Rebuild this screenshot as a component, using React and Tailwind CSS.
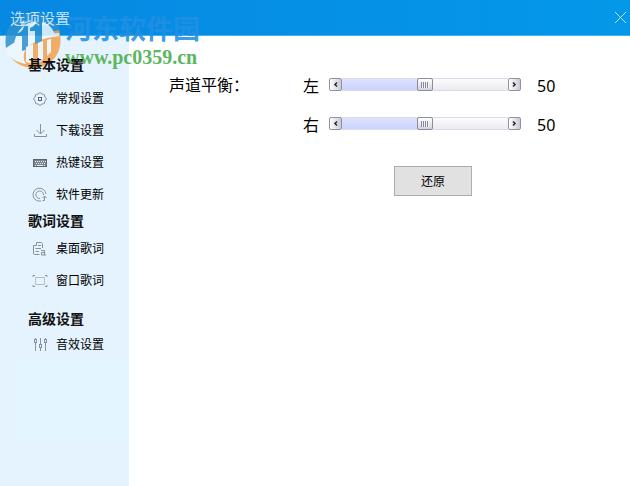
import { useState } from 'react'

const icon = { width: 16, height: 16, viewBox: '0 0 16 16', fill: 'none', stroke: '#87939b', 'aria-hidden': true }

function GearIcon() {
  return (
    <svg {...icon}>
      <path d="M6 3Q8 0 10 3Q13 2.5 13 6Q16 8 13 10Q13 13.5 10 13Q8 16 6 13Q3 13.5 3 10Q0 8 3 6Q3 2.5 6 3Z" />
      <rect x="6.5" y="6.5" width="3" height="3" stroke="#59636a" />
    </svg>
  )
}

function DownloadIcon() {
  return (
    <svg {...icon}>
      <path d="M8.5 1V11M4.5 7L8.5 11L12.5 7" />
      <path d="M2.5 11V13.5H14.5V11" />
    </svg>
  )
}

function KeyboardIcon() {
  return (
    <svg {...icon}>
      <rect x="1.5" y="4.5" width="13" height="7" fill="#7c868c" stroke="#59636a" />
      <path d="M3 6.5H14M4 8.5H14" stroke="#dcecf5" strokeDasharray="1 1" />
      <path d="M3 10.5H4M5 10.5H11M12 10.5H13" stroke="#dcecf5" />
    </svg>
  )
}

function UpdateIcon() {
  return (
    <svg {...icon}>
      <path d="M9 14A6.5 6.5 0 1 1 14 7" />
      <path d="M8 11.5A3.8 3.8 0 1 1 11.5 8" />
      <path d="M10.5 11L12.5 9L14.5 11M12.5 9V13.5H10.5" />
    </svg>
  )
}

function LyricsIcon() {
  return (
    <svg {...icon}>
      <path d="M7.5 13.5H2.5Q1.5 13.5 1.5 12V4.5H4.5V1.5H9.5L10.5 2.5V7" />
      <path d="M6 4.5H9M3.5 7.5H9M3.5 10.5H7" />
      <path d="M9 9.5H12.5V14M12.5 11.5H9.5V14H14" />
    </svg>
  )
}

function WindowIcon() {
  return (
    <svg {...icon}>
      <rect x="3.5" y="4.5" width="9" height="7" stroke="#b2c2cb" />
      <path d="M1 4V2.5H3M13 2.5H15V4M1 12V13.5H3M13 13.5H15V12" />
    </svg>
  )
}

function MixerIcon() {
  return (
    <svg {...icon}>
      <path d="M3.5 5V14M8.5 1V7M8.5 11V14M13.5 5V14M3.5 1V2M13.5 1V2" />
      <rect x="2.5" y="2.5" width="2" height="3" />
      <rect x="7.5" y="7.5" width="2" height="3" />
      <rect x="12.5" y="2.5" width="2" height="3" />
    </svg>
  )
}

function SiteLogo() {
  return (
    <svg className="opacity-85" width="58" height="58" viewBox="4 11 58 58" aria-hidden="true">
      <path d="M6 48C3 28 15 14 33 13C47 13 57 20 60 31C42 32 22 36 6 48Z" fill="#2b92d0" />
      <path d="M59 30C65 50 53 67 34 68C21 68 11 61 7 50C24 40 42 34 59 30Z" fill="#f2a14d" />
      <path d="M14 46C15 33 22 24 32 22C44 20 52 25 55 35Q36 38 14 46Z" fill="#eef8fd" />
      <path d="M6 50C20 39 39 34 58 33Q60 33 59 36C42 38 30 43 25 50Q22 58 26 64Q10 61 6 50Z" fill="#eef8fd" />
      <path d="M16 34Q23 32 24 26H28V49L22 51V36H16Z" fill="#2b92d0" />
      <path d="M30 28Q36 26 37 20H42V41L35 44V31H30Z" fill="#2b92d0" />
      <path d="M26 47L33 44V64L26 62ZM38 43L43 41V59Q41 62 38 63ZM47 40L51 39V52L47 56Z" fill="#eef8fd" />
      <path d="M23 20l1 2 3 0-2 2 1 3-3-2-2 2 0-3-2-2 3 0z" fill="#9fd2f2" />
    </svg>
  )
}

const sections = [
  {
    title: '基本设置',
    className: 'space-y-2 pt-[19px]',
    items: [
      { name: '常规设置', Icon: GearIcon },
      { name: '下载设置', Icon: DownloadIcon },
      { name: '热键设置', Icon: KeyboardIcon },
      { name: '软件更新', Icon: UpdateIcon },
    ],
  },
  {
    title: '歌词设置',
    className: 'space-y-0.5',
    items: [
      { name: '桌面歌词', Icon: LyricsIcon },
      { name: '窗口歌词', Icon: WindowIcon },
    ],
  },
  {
    title: '高级设置',
    className: 'pt-3',
    items: [{ name: '音效设置', Icon: MixerIcon }],
  },
]

function Sidebar() {
  return (
    <nav className="w-[129px] shrink-0 bg-[#e4f3fd]">
      {sections.map(s => (
        <section key={s.title} className={s.className}>
          <h2 className="relative z-10 pl-7 text-sm leading-5 font-bold text-[#111]">{s.title}</h2>
          <ul>
            {s.items.map(({ name, Icon }) => (
              <li key={name}>
                <a href="#" className="flex h-8 items-center gap-2 pl-8 text-xs text-black">
                  <Icon />
                  {name}
                </a>
              </li>
            ))}
          </ul>
        </section>
      ))}
      <div className="mr-0.5 ml-[15px] h-20 bg-[#e3f6ff]"></div>
    </nav>
  )
}

function StepButton({ label, path, onClick }) {
  return (
    <button
      aria-label={label}
      onClick={onClick}
      className="flex h-[13px] w-[13px] shrink-0 items-center justify-center rounded-xs border border-[#92929f] bg-linear-to-r from-white to-[#c9c9d6]"
    >
      <svg width="5" height="7" viewBox="0 0 5 7" fill="none" stroke="#222" strokeWidth="1.5">
        <path d={path} />
      </svg>
    </button>
  )
}

function Channel({ id, name, value, onChange }) {
  const step = n => onChange(Math.max(0, Math.min(100, value + n)))

  return (
    <div className="flex h-[39px] items-center">
      <label htmlFor={id} className="w-[26px]">{name}</label>
      <div className="flex w-48 items-center pb-0.5">
        <StepButton label={`${name} -`} path="M4 1.5L2 3.5L4 5.5" onClick={() => step(-1)} />
        <input
          id={id}
          type="range"
          min="0"
          max="100"
          value={value}
          onChange={e => onChange(Number(e.target.value))}
          style={{ backgroundSize: `${value}% 100%, 100% 100%` }}
          className="h-[13px] min-w-0 flex-1 appearance-none border-y border-[#d9dbe8] bg-[linear-gradient(#dde2ff,#cbd3ff),linear-gradient(#fcfcfd,#ebebf0)] bg-no-repeat [&::-webkit-slider-thumb]:h-[13px] [&::-webkit-slider-thumb]:w-4 [&::-webkit-slider-thumb]:appearance-none [&::-webkit-slider-thumb]:rounded-xs [&::-webkit-slider-thumb]:border [&::-webkit-slider-thumb]:border-[#8c8c9b] [&::-webkit-slider-thumb]:bg-[repeating-linear-gradient(90deg,#85859a_0_1px,#f4f4f8_1px_2px),linear-gradient(#ffffff,#d2d2de)] [&::-webkit-slider-thumb]:bg-[size:8px_6px,100%_100%] [&::-webkit-slider-thumb]:bg-center [&::-webkit-slider-thumb]:bg-no-repeat"
        />
        <StepButton label={`${name} +`} path="M1 1.5L3 3.5L1 5.5" onClick={() => step(1)} />
      </div>
      <output htmlFor={id} className="pl-4">{value}</output>
    </div>
  )
}

export default function App() {
  const [left, setLeft] = useState(50)
  const [right, setRight] = useState(50)

  function reset() {
    setLeft(50)
    setRight(50)
  }

  return (
    <div className="relative flex min-h-screen flex-col bg-white font-['Noto_Sans','Noto_Sans_CJK_SC',sans-serif]">
      <header className="flex h-9 items-center justify-between border-b border-[#4aaeea] bg-linear-to-r from-[#0788e2] to-[#0498e9] pr-[3px] pl-2.5">
        <h1 className="relative z-10 text-[15px] leading-5 text-white/75">选项设置</h1>
        <button aria-label="关闭" className="text-[#b9e2fa]">
          <svg width="13" height="13" viewBox="0 0 13 13" stroke="currentColor">
            <path d="M1 1L12 12M12 1L1 12" />
          </svg>
        </button>
      </header>

      <div className="flex flex-1">
        <Sidebar />
        <main className="flex-1 pt-[30px] pl-10 text-base text-black">
          <div className="flex">
            <h2 className="w-[134px] leading-[39px]">声道平衡：</h2>
            <div>
              <Channel id="left" name="左" value={left} onChange={setLeft} />
              <Channel id="right" name="右" value={right} onChange={setRight} />
            </div>
          </div>
          <button onClick={reset} className="mt-[22px] ml-[225px] h-[30px] w-[78px] border border-[#adadad] bg-[#e1e1e1] pt-0.5 text-xs">
            还原
          </button>
        </main>
      </div>

      {/* site watermark, floats over the title bar and sidebar */}
      <div className="pointer-events-none absolute top-[11px] left-1 flex gap-[3px] whitespace-nowrap">
        <SiteLogo />
        <div>
          <p className="text-[27px] leading-9 font-bold text-[#2090e2]/90">河东软件园</p>
          <p className="font-['Liberation_Serif',serif] text-xl leading-5 font-bold text-[#5cb660]">www.pc0359.cn</p>
        </div>
      </div>
    </div>
  )
}
